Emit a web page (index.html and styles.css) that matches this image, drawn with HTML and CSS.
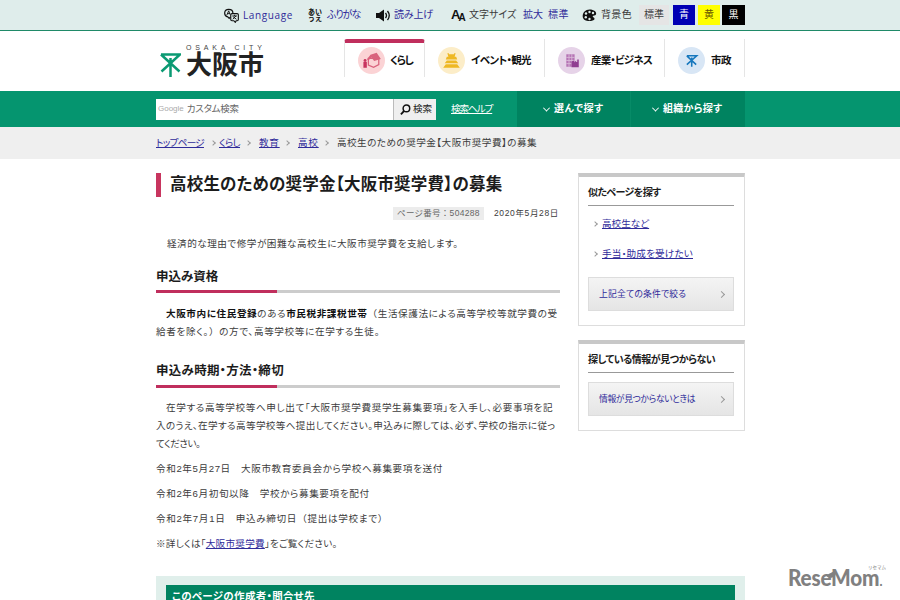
FILE: index.html
```html
<!DOCTYPE html>
<html lang="ja">
<head>
<meta charset="utf-8">
<title>大阪市:高校生のための奨学金【大阪市奨学費】の募集</title>
<link rel="stylesheet" href="styles.css">
</head>
<body>
<div class="topbar">
  <div class="tools">
    <svg viewBox="0 0 16 16" class="ico"><path d="M7 9.500 5.500 11 4 9.500C-.5 8.500-.5 1.500 5 1.500c3 0 4.500 2 4.500 4" fill="none" stroke="#111" stroke-width="1.300"/><path d="M3 7.500 5 3l1.500 4M3.800 6h2.400" fill="none" stroke="#111"/><path d="M8.500 6h5.500q1.300 0 1.300 1.300v5q0 1.300-1.300 1.300h-1L12 15.300 10.500 13.600h-2q-1.300 0-1.300-1.300v-5Q7.200 6 8.500 6z" fill="#dfedeb" stroke="#111" stroke-width="1.200"/><path d="M8.800 8.500h5M11.300 7.200v1.300M9.300 12l3.500-3.500M9.800 9.500l3.500 2.500" stroke="#111" fill="none"/></svg>
    <a class="t lang">Language</a>
    <span class="kana">あい<br>うえ</span>
    <a class="t furi">ふりがな</a>
    <svg viewBox="0 0 15 14" class="ico"><path d="M0 4.500h3L8 1v12L3 9.500H0z" fill="#111"/><path d="M9.500 4.500q2 2.500 0 5M11.500 2.500q3.500 4.500 0 9" fill="none" stroke="#111" stroke-width="1.300"/></svg>
    <a class="t yomi">読み上げ</a>
    <span class="aa">A<small>A</small></span>
    <span class="t">文字サイズ</span>
    <a class="t">拡大</a>
    <a class="t wide">標準</a>
    <svg viewBox="0 0 15 14" class="ico"><path d="M7.500 1C12 1 15 3.500 14 6c-.7 1.500-3 .5-3.300 2-.2 1 2.300 1 1.800 2.700C11.500 13 1 14 .7 8 .5 4 3.500 1 7.500 1z" fill="#111"/><g fill="#dfedeb"><circle cx="4" cy="5" r="1.200"/><circle cx="7.500" cy="3.500" r="1.200"/><circle cx="11" cy="4.500" r="1.200"/><circle cx="3.800" cy="8.700" r="1.200"/><circle cx="7.500" cy="10.500" r="1.200"/></g></svg>
    <span class="t bg">背景色</span>
    <b class="sw std">標準</b><b class="sw blue">青</b><b class="sw yel">黄</b><b class="sw blk">黒</b>
  </div>
</div>
<header class="head">
  <div class="logo">
    <svg viewBox="0 0 21 24" class="mio"><path d="M1 1.500h19L1.500 18.500M1 1.500 19.500 18.500M10.500 5v19" fill="none" stroke="#0b9a73" stroke-width="2.500"/></svg>
    <div><div class="en">OSAKA CITY</div><div class="ja">大阪市</div></div>
  </div>
  <nav class="nav">
    <a class="n1"><svg viewBox="0 0 26 26"><circle cx="13" cy="13" r="13" fill="#fbd3d5"/><path d="M10 11h10v6l-5 2.500-5-2z" fill="#fbd3d5" stroke="#d9627c" stroke-width="1.200"/><path d="M8.500 12 12 7.500l6-2 4 6-6.500 2-2.500-3.500-2.500 2.500z" fill="#d9627c"/><circle cx="6.800" cy="13" r="1.400" fill="#c8345e"/><path d="M5.200 14.300h3.300V20H5.200z" fill="#c8345e"/></svg><span class="t">くらし</span></a>
    <a class="n2"><svg viewBox="0 0 26 26"><circle cx="13" cy="13" r="13" fill="#fcedc8"/><path d="M9 6h1.500v1h5V6H17l-1 3.500h1.500l1 2.500h-11l1-2.500H10zM8.500 13h9l2 2.700h-13zM7.500 16.600h11l2.500 3.400H5z" fill="#eeb824"/></svg><span class="t">イベント・観光</span></a>
    <a class="n3"><svg viewBox="0 0 26 26"><circle cx="13" cy="13" r="13" fill="#e6d3e8"/><path d="M8 7h8v12H8z" fill="#b573b4"/><path d="M8 10h8M8 13h8M8 16h8M10.600 7v12M13.300 7v12" stroke="#dbbedb" stroke-width=".8"/><path d="M13 19.500V14l2.500-1v2l2-2v1.500h1V12H20v7.500z" fill="#8f3e91"/></svg><span class="t">産業・ビジネス</span></a>
    <a class="n4"><svg viewBox="0 0 26 26"><circle cx="13" cy="13" r="13" fill="#d8e6f5"/><path d="M8.500 8.500h9.500L8.500 17M8.500 8.500 17.500 17M13.200 10v9" fill="none" stroke="#1677bd" stroke-width="1.500"/></svg><span class="t">市政</span></a>
  </nav>
</header>
<div class="green">
  <div class="wrap">
    <div class="search"><span class="g">Google</span><span class="t">カスタム検索</span></div>
    <div class="btn"><svg viewBox="0 0 12 12"><circle cx="7" cy="4.800" r="3.600" fill="none" stroke="#111" stroke-width="1.600"/><path d="M4.500 7.500 1 11.200" stroke="#111" stroke-width="2"/></svg><span class="t">検索</span></div>
    <a class="help t">検索ヘルプ</a>
    <div class="tab tab1"><i></i><span class="t">選んで探す</span></div>
    <div class="tab tab2"><i></i><span class="t">組織から探す</span></div>
  </div>
</div>
<div class="crumbs"><div class="wrap">
  <a class="t c1">トップページ</a><i></i><a class="t c2">くらし</a><i></i><a class="t c3">教育</a><i></i><a class="t c4">高校</a><i></i><span class="t c5">高校生のための奨学金【大阪市奨学費】の募集</span>
</div></div>
<div class="page">
  <main>
    <h1>高校生のための奨学金【大阪市奨学費】の募集</h1>
    <div class="meta"><span class="no t">ページ番号<span class="fw">：</span>504288</span><span class="date t">2020年5月28日</span></div>
    <p class="p1"><span class="t">経済的な理由で修学が困難な高校生に大阪市奨学費を支給します。</span></p>
    <h2>申込み資格</h2>
    <p class="p2"><span class="t in l1"><b>大阪市内に住民登録</b>のある<b>市民税非課税世帯</b><span class="fw">（</span>生活保護法による高等学校等就学費の受</span><span class="t l2">給者を除く。<span class="fw">）</span>の方で、高等学校等に在学する生徒。</span></p>
    <h2 class="h2b">申込み時期・方法・締切</h2>
    <p class="p3"><span class="t in l3">在学する高等学校等へ申し出て「大阪市奨学費奨学生募集要項」を入手し、必要事項を記</span><span class="t l4">入のうえ、在学する高等学校等へ提出してください。申込みに際しては、必ず、学校の指示に従っ</span><span class="t l5">てください。</span></p>
    <p><span class="t l6">令和2年5月27日　大阪市教育委員会から学校へ募集要項を送付</span></p>
    <p><span class="t l6">令和2年6月初旬以降　学校から募集要項を配付</span></p>
    <p><span class="t l7">令和2年7月1日　申込み締切日<span class="fw">（</span>提出は学校まで<span class="fw">）</span></span></p>
    <p><span class="t l8">※詳しくは「<a>大阪市奨学費</a>」をご覧ください。</span></p>
  </main>
  <aside>
    <section class="s1"><h3>似たページを探す</h3>
      <div class="li"><i></i><a class="t">高校生など</a></div>
      <div class="li"><i></i><a class="t loose">手当・助成を受けたい</a></div>
      <a class="more"><span class="t">上記全ての条件で絞る</span><i></i></a></section>
    <section class="s2"><h3>探している情報が見つからない</h3>
      <a class="more"><span class="t">情報が見つからないときは</span><i></i></a></section>
  </aside>
</div>
<div class="contact"><div>このページの作成者・問合せ先</div></div>
<div class="mark"><small>リセマム</small><div class="word">ReseMom<span class="dot">.</span></div><svg class="leaf" viewBox="0 0 12 12"><path d="M1 8C1 3 6 3 11 0c1 6-2 10-6 9z" fill="#808080"/></svg></div>
</body>
</html>
```
FILE: styles.css
```css
* { box-sizing: border-box; }
body { margin: 0; height: 600px; overflow: hidden; position: relative; background: #fff; color: #3c3c3c; font: 9.6px/18px "Liberation Sans", "Noto Sans CJK JP", sans-serif; font-feature-settings: "palt"; }
.t { white-space: nowrap; }
.fw { font-feature-settings: normal; }
i { display: block; flex: none; }
a { color: #2f2b9a; }
svg { display: block; flex: none; }
.wrap { width: 589px; margin-left: 156px; display: flex; }

/* utility bar */
.topbar { height: 31px; background: #dfedeb; border-bottom: 1px solid #1f8a68; }
.tools { display: grid; grid-template-columns: 19px 65px 19px 49px 18px 57px 18px 54px 25px 34px 19px 38px 34px 25px 24px 23px; margin-left: 224px; align-items: center; height: 30px; font-size: 10px; }
.ico { width: 15px; height: 15px; }
.lang { font: 10px/17px "Open Sans", sans-serif; letter-spacing: .62px; }
.furi { letter-spacing: -1px; }
.yomi { letter-spacing: -.18px; }
.wide { letter-spacing: .5px; }
.bg { letter-spacing: .33px; }
.kana { font: bold 7px/7px "Noto Sans CJK JP", sans-serif; color: #111; }
.aa { font: bold 13px/14px "Liberation Sans", sans-serif; color: #111; white-space: nowrap; letter-spacing: -2px; }
.aa small { font-size: 10px; position: relative; top: 2px; }
.sw { font-weight: 400; height: 20px; line-height: 20px; text-align: center; }
.std { width: 30px; background: #e5e5e5; }
.blue { width: 22px; background: #0000b4; color: #fff; }
.yel { width: 22px; background: #ff0; color: #665500; }
.blk { width: 23px; background: #000; color: #fff; }

/* header */
.head { height: 60px; display: flex; }
.logo { width: 184px; margin-left: 160px; display: flex; gap: 5px; }
.mio { width: 21px; height: 24px; margin-top: 22px; }
.en { font: 7px/8px "Liberation Sans", sans-serif; letter-spacing: 3.8px; white-space: nowrap; color: #444; margin-top: 13px; width: 80px; }
.ja { font: 700 26px/26px "Noto Sans CJK JP", sans-serif; color: #222; margin-top: -2px; }
.nav { display: flex; margin-top: 8px; height: 38px; font-weight: 700; }
.nav a { display: flex; align-items: center; gap: 6px; color: #111; border-right: 1px solid #e5e5e5; padding: 4px 0 0 13px; font-size: 10.5px; }
.nav svg { width: 27px; height: 27px; }
.nav .n1 { width: 81px; border-left: 1px solid #e5e5e5; border-top: 4px solid #c02e5d; border-radius: 3px 3px 0 0; padding-top: 0; gap: 5px; letter-spacing: -1.2px; }
.n2 { width: 120px; letter-spacing: -.63px; }
.n3 { width: 120px; letter-spacing: -.77px; }
.n4 { width: 80px; letter-spacing: -.5px; }

/* search bar */
.green { height: 36px; background: #05956f; }
.green .wrap { height: 36px; align-items: center; }
.search { width: 237px; height: 21px; background: #fff; display: flex; align-items: center; color: #666; padding-left: 2px; gap: 3px; font-size: 9.5px; letter-spacing: -.26px; }
.g { font: 8px/20px "Liberation Sans", sans-serif; letter-spacing: 0; color: #aaa; }
.btn { width: 43px; height: 21px; background: #efefef; border-left: 1px solid #bbb; display: flex; align-items: center; gap: 2px; padding-left: 6px; color: #222; }
.btn svg { width: 11px; height: 11px; }
.help { width: 66px; margin-left: 15px; color: #fff; text-decoration: underline; letter-spacing: -1.1px; }
.tab { width: 114px; height: 36px; background: #008360; color: #fff; font-weight: 700; font-size: 10px; display: flex; align-items: center; padding-left: 22px; gap: 5px; }
.tab1 { border-right: 1px solid #078b67; padding-left: 27px; letter-spacing: .5px; }
.tab2 { letter-spacing: .25px; }
.tab i { width: 5px; height: 5px; border: solid #fff; border-width: 0 1.5px 1.5px 0; transform: rotate(45deg) translate(-1px, -1px); }

/* breadcrumbs */
.crumbs { height: 32px; background: #efefef; }
.crumbs .wrap { height: 32px; align-items: center; }
.crumbs a, .li a, p a { text-decoration: underline; text-underline-offset: 1px; }
.crumbs i, .li i, .more i { width: 5px; height: 5px; border: solid #999; border-width: 1px 1px 0 0; transform: rotate(45deg); }
.crumbs i { width: 4px; height: 4px; margin-right: 9px; }
.c1 { width: 55px; letter-spacing: -.7px; }
.crumbs .c1 + i { margin-right: 4px; }
.c2 { width: 27px; letter-spacing: -.67px; }
.c3, .c4 { width: 26px; padding-right: 5px; letter-spacing: .75px; }
.c5 { letter-spacing: .46px; }

/* content */
.page { display: flex; gap: 18px; margin: 14px 0 0 156px; height: 403px; }
main { width: 404px; }
h1 { margin: 0; height: 24px; border-left: 5px solid #c8355f; padding-left: 9px; font-size: 16.5px; line-height: 23px; letter-spacing: .19px; white-space: nowrap; color: #1c1c1c; }
.meta { display: flex; justify-content: flex-end; align-items: center; height: 14px; margin-top: 9px; font-size: 8.5px; }
.no { background: #ececec; height: 13px; line-height: 13px; padding: 0 4px; width: 91px; margin-right: 10px; color: #666; letter-spacing: .32px; }
.date { width: 66px; letter-spacing: .64px; }
p { margin: 0 0 7px; height: 18px; }
p .t { display: block; }
.p1 { margin: 15px 0 0; padding-left: 11px; letter-spacing: .5px; }
h2 { font-size: 12.5px; line-height: 22px; letter-spacing: 0; margin: 13px 0 12px; height: 27px; color: #1c1c1c; border-bottom: 3px solid; border-image: linear-gradient(90deg, #c02e5d 30%, #ccc 30%) 1; }
.in { margin-left: 10px; }
.p2 { height: 36px; }
.p2 b { color: #111; }
h2.h2b { margin: 20px 0 11px; line-height: 21px; letter-spacing: .29px; }
.p3 { height: 54px; }
.l1 { letter-spacing: .58px; }
.l2 { letter-spacing: .65px; }
.l3 { letter-spacing: .62px; }
.l4 { letter-spacing: .36px; }
.l5 { letter-spacing: -.5px; }
.l6 { letter-spacing: .61px; }
.l7 { letter-spacing: .68px; }
.l8 { letter-spacing: .25px; }

/* sidebar */
aside { width: 167px; }
section { border: 1px solid #ddd; border-top: 4px solid #c8c8c8; padding: 5px 10px 0 9px; }
.s1 { height: 153px; margin-bottom: 14px; }
.s2 { height: 91px; }
h3 { margin: 0 0 9px; font-size: 10px; line-height: 22px; height: 24px; border-bottom: 1px solid #999; color: #1c1c1c; letter-spacing: -.6px; white-space: nowrap; }
.s2 h3 { letter-spacing: -.5px; }
.li { display: flex; align-items: center; height: 18px; margin-bottom: 12px; gap: 5px; padding-left: 5px; }
.li i { width: 4px; height: 4px; }
.loose { letter-spacing: .18px; }
.more { display: flex; align-items: center; justify-content: space-between; height: 34px; border: 1px solid #ddd; background: linear-gradient(#f4f4f4, #e5e5e5); padding: 0 9px 0 10px; font-size: 8.8px; letter-spacing: .2px; margin-top: 14px; }
.s2 .more { margin-top: 9px; letter-spacing: -.36px; }

.contact { margin-left: 156px; width: 589px; height: 24px; background: #e0efeb; padding: 9px 10px 0; }
.contact div { background: #008360; color: #fff; font-weight: 700; font-size: 10.5px; height: 20px; padding: 2px 6px; letter-spacing: .33px; }
.mark { position: absolute; left: 788px; top: 563px; width: 100px; color: #808080; }
.mark small { display: block; font: 4.5px/5px "Noto Sans CJK JP", sans-serif; margin: 2px 0 -7px 80px; white-space: nowrap; }
.word { font: 900 23px/28px Lato, sans-serif; transform: scaleX(.9); transform-origin: 0 0; letter-spacing: -.2px; }
.dot { font-size: 14px; }
.leaf { position: absolute; left: 38px; top: 8px; width: 10px; height: 9px; }
```
